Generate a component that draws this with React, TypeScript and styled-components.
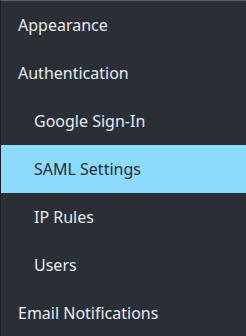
import React from "react";
import styled, { createGlobalStyle } from "styled-components";

const Global = createGlobalStyle`
  html, body { margin: 0; padding: 0; background: #2a2f36; }
  body { font-family: "Noto Sans", "DejaVu Sans", sans-serif; }
`;

const Nav = styled.nav`
  width: 246px;
  height: 336px;
  box-sizing: border-box;
  background: #2a2f36;
  border-top: 1px solid #5c6065;
  border-left: 1px solid #1d2126;
  overflow: hidden;
  display: flex;
  flex-direction: column;
`;

const Item = styled.div<{ $level: number; $active?: boolean }>`
  flex: 0 0 48px;
  height: 48px;
  display: flex;
  align-items: center;
  padding-left: ${(p) => (p.$level === 0 ? 17 : 33)}px;
  font-size: 16px;
  color: ${(p) => (p.$active ? "#262b31" : "#e6ecef")};
  background: ${(p) => (p.$active ? "#8ddbff" : "transparent")};
  white-space: nowrap;
`;

const items: { label: string; level: number; active?: boolean }[] = [
  { label: "Appearance", level: 0 },
  { label: "Authentication", level: 0 },
  { label: "Google Sign-In", level: 1 },
  { label: "SAML Settings", level: 1, active: true },
  { label: "IP Rules", level: 1 },
  { label: "Users", level: 1 },
  { label: "Email Notifications", level: 0 },
];

export default function App() {
  return (
    <>
      <Global />
      <Nav>
        {items.map((it) => (
          <Item key={it.label} $level={it.level} $active={it.active}>
            {it.label}
          </Item>
        ))}
      </Nav>
    </>
  );
}
